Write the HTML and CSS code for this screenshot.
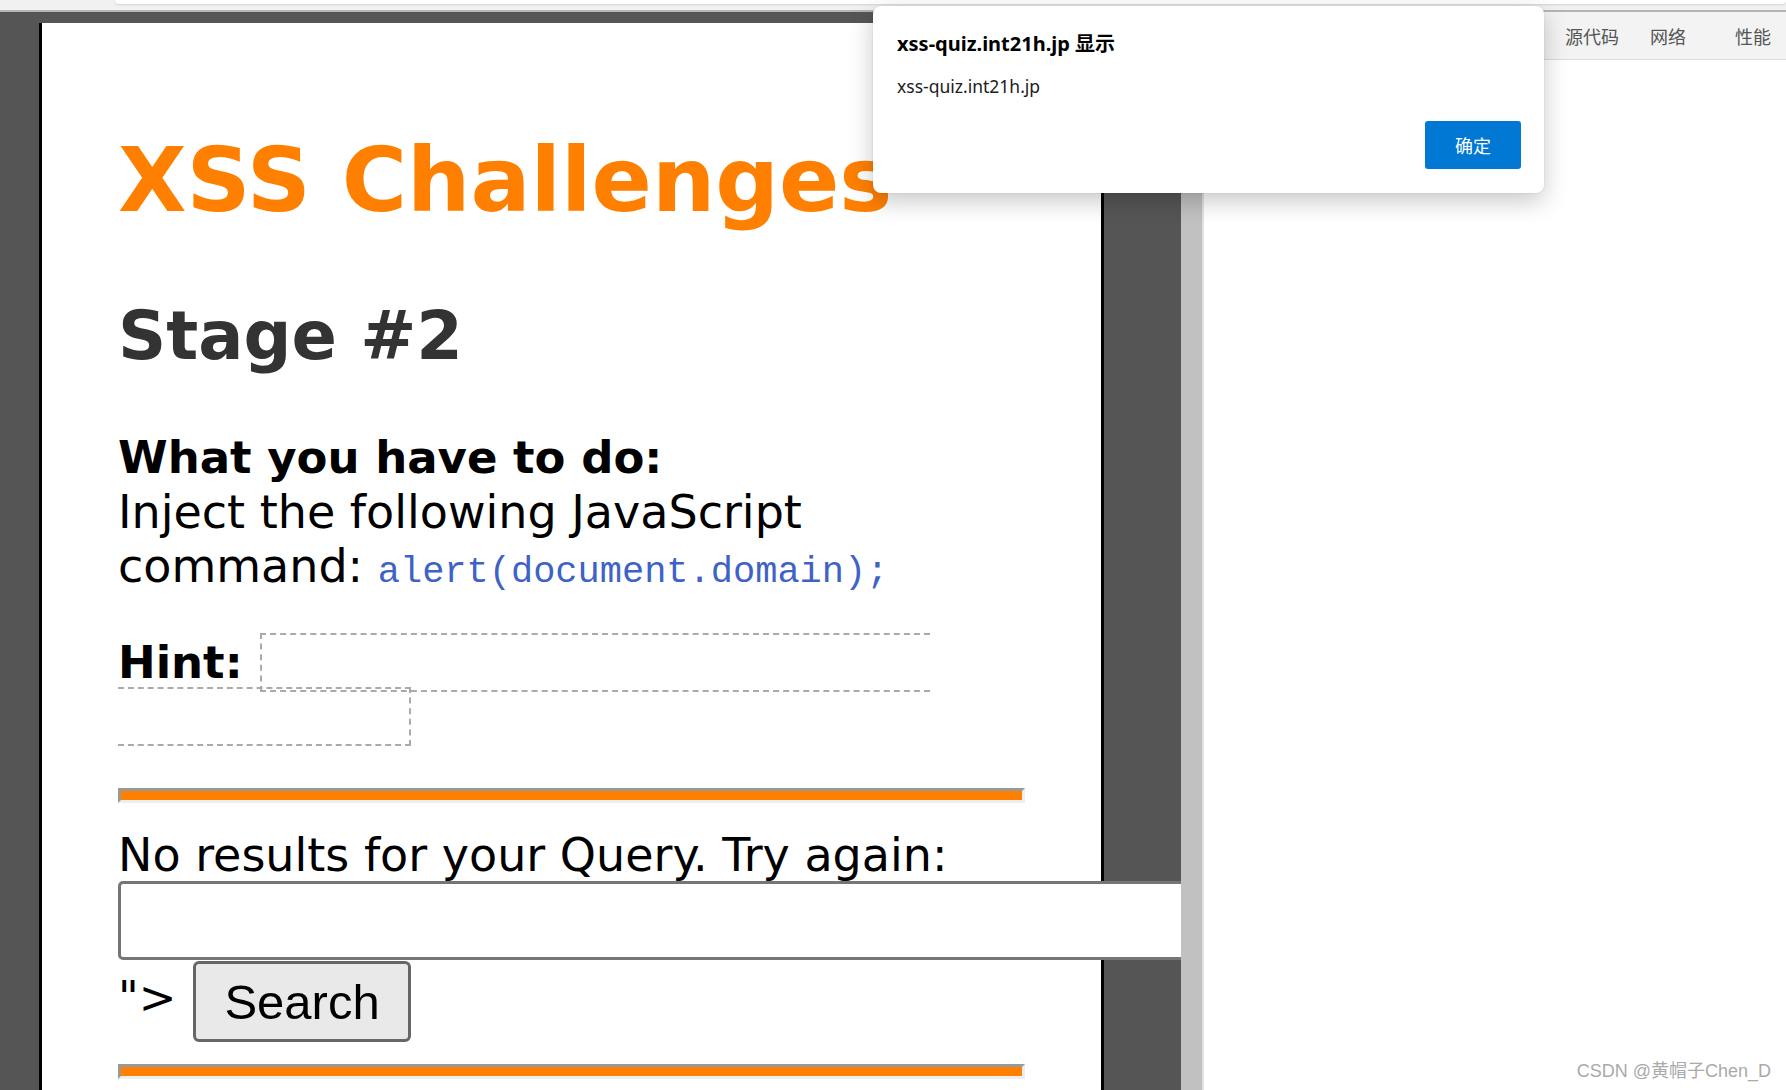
FILE: index.html
```html
<!DOCTYPE html>
<html lang="en">
<head>
<meta charset="utf-8">
<title>XSS Challenges - Stage #2</title>
<link rel="stylesheet" href="styles.css">
</head>
<body>
<div class="screen">
  <div class="topstrip"><div class="addrbar"></div></div>
  <div class="main">
    <div class="viewport">
      <div class="page">
        <h1 class="title">XSS Challenges</h1>
        <h2 class="stage">Stage #2</h2>
        <p class="task"><b class="label">What you have to do:</b><br>Inject the following JavaScript command: <span class="code">alert(document.domain);</span></p>
        <p class="hint"><b class="label">Hint:</b> <span class="hint-box">close the current tag and add SCRIPT tag...</span></p>
        <hr class="rule">
        <div class="query">No results for your Query. Try again:</div>
        <input class="qinput" type="text" value="">
        <div class="actions"><span class="quote">"&gt;</span><button class="search" type="button">Search</button></div>
        <hr class="rule rule2">
      </div>
    </div>
    <div class="scrollbar"></div>
    <div class="devtools">
      <div class="tabs">
        <span class="tab">源代码</span>
        <span class="tab tab-net">网络</span>
        <span class="tab tab-perf">性能</span>
      </div>
    </div>
  </div>
  <div class="dialog">
    <div class="dlg-title">xss-quiz.int21h.jp 显示</div>
    <div class="dlg-msg">xss-quiz.int21h.jp</div>
    <div class="dlg-actions"><button class="dlg-ok" type="button">确定</button></div>
  </div>
  <div class="watermark">CSDN @黄帽子Chen_D</div>
</div>
</body>
</html>
```
FILE: styles.css
```css
* { box-sizing: border-box; }

body {
  margin: 0;
  width: 1786px;
  height: 1090px;
  overflow: hidden;
  font-family: "DejaVu Sans", Verdana, sans-serif;
  background: #fff;
}

.screen {
  position: relative;
  width: 1786px;
  height: 1090px;
  overflow: hidden;
}

.topstrip {
  height: 10px;
  background: #f1f1f1;
  padding-left: 115px;
}

.addrbar {
  height: 4px;
  background: #fff;
  border-radius: 0 0 6px 6px;
  box-shadow: 0 1px 2px rgba(0, 0, 0, 0.12);
}

.main {
  display: flex;
  height: 1080px;
  border-top: 2px solid #b5b5b5;
}

.viewport {
  width: 1181px;
  flex: none;
  background: #555;
  overflow: hidden;
}

.page {
  display: flow-root;
  margin: 11px 0 0 39px;
  width: 1065px;
  min-height: 1100px;
  background: #fff;
  border-left: 3px solid #000;
  border-right: 3px solid #000;
  padding: 0 76px;
}

.title {
  margin: 105px 0 0;
  font-size: 89px;
  line-height: 104px;
  font-weight: bold;
  color: #ff8000;
  white-space: nowrap;
}

.stage {
  margin: 65px 0 0;
  font-size: 67px;
  line-height: 78px;
  font-weight: bold;
  color: #333;
}

.task {
  margin: 55px 0 0;
  font-size: 46px;
  line-height: 54px;
  color: #000;
}

.label {
  font-size: 45px;
}

.code {
  font-family: "Liberation Mono", monospace;
  font-size: 37px;
  line-height: 1;
  color: #3f62c6;
}

.hint {
  margin: 43px 0 0;
  font-size: 45px;
  line-height: 54px;
  color: #000;
}

.hint-box {
  color: #fff;
  border: 2px dashed #aaa;
  padding: 1px;
  margin-left: 3px;
}

.rule {
  margin: 44px 0 0;
  height: 15px;
  background: #ff8000;
  border-style: solid;
  border-width: 3px;
  border-color: #999 #eee #eee #999;
}

.query {
  margin-top: 27px;
  font-size: 46px;
  line-height: 51px;
  color: #000;
  white-space: nowrap;
}

.qinput {
  display: block;
  width: 1150px;
  height: 79px;
  margin: 0;
  padding: 0;
  border: 3px solid #767676;
  border-radius: 5px;
  background: #fff;
}

.actions {
  display: flex;
  align-items: flex-start;
  margin-top: 1px;
  font-size: 45px;
  line-height: 54px;
  color: #000;
}

.quote {
  margin-top: 10px;
}

.search {
  margin: 0 0 0 17px;
  height: 81px;
  padding: 0 28px;
  font-family: "Liberation Sans", Arial, sans-serif;
  font-size: 49px;
  color: #000;
  background: #e9e9e9;
  border: 3px solid #666;
  border-radius: 6px;
}

.rule2 {
  margin-top: 22px;
}

.scrollbar {
  width: 23px;
  flex: none;
  background: #c1c1c1;
  border-right: 2px solid #e2e2e2;
}

.devtools {
  flex: 1;
  background: #fff;
}

.tabs {
  height: 48px;
  display: flex;
  align-items: center;
  padding-left: 361px;
  background: #f3f3f3;
  border-bottom: 1px solid #dcdcdc;
  font-family: "Noto Sans CJK SC", sans-serif;
  font-size: 18px;
  color: #555;
}

.tab-net { margin-left: 31px; }
.tab-perf { margin-left: 49px; }

.dialog {
  position: absolute;
  left: 873px;
  top: 6px;
  width: 671px;
  height: 187px;
  display: flex;
  flex-direction: column;
  padding: 0 23px 24px 24px;
  background: #fff;
  border-radius: 8px;
  box-shadow: 0 8px 24px rgba(0, 0, 0, 0.22), 0 0 2px rgba(0, 0, 0, 0.12);
  font-family: "Noto Sans", "Noto Sans CJK SC", sans-serif;
}

.dlg-title {
  margin-top: 25px;
  font-size: 20px;
  line-height: 26px;
  font-weight: bold;
  color: #000;
}

.dlg-msg {
  margin-top: 17px;
  font-size: 17.5px;
  line-height: 24px;
  color: #202020;
}

.dlg-actions {
  margin-top: auto;
  display: flex;
  justify-content: flex-end;
}

.dlg-ok {
  width: 96px;
  height: 48px;
  padding: 0;
  background: #0078d4;
  color: #fff;
  border: none;
  border-radius: 3px;
  font-family: "Noto Sans CJK SC", sans-serif;
  font-size: 18px;
}

.watermark {
  position: absolute;
  right: 15px;
  bottom: 10px;
  font-family: "Liberation Sans", "Noto Sans CJK SC", sans-serif;
  font-size: 18px;
  line-height: 18px;
  color: #aaa;
}
```
